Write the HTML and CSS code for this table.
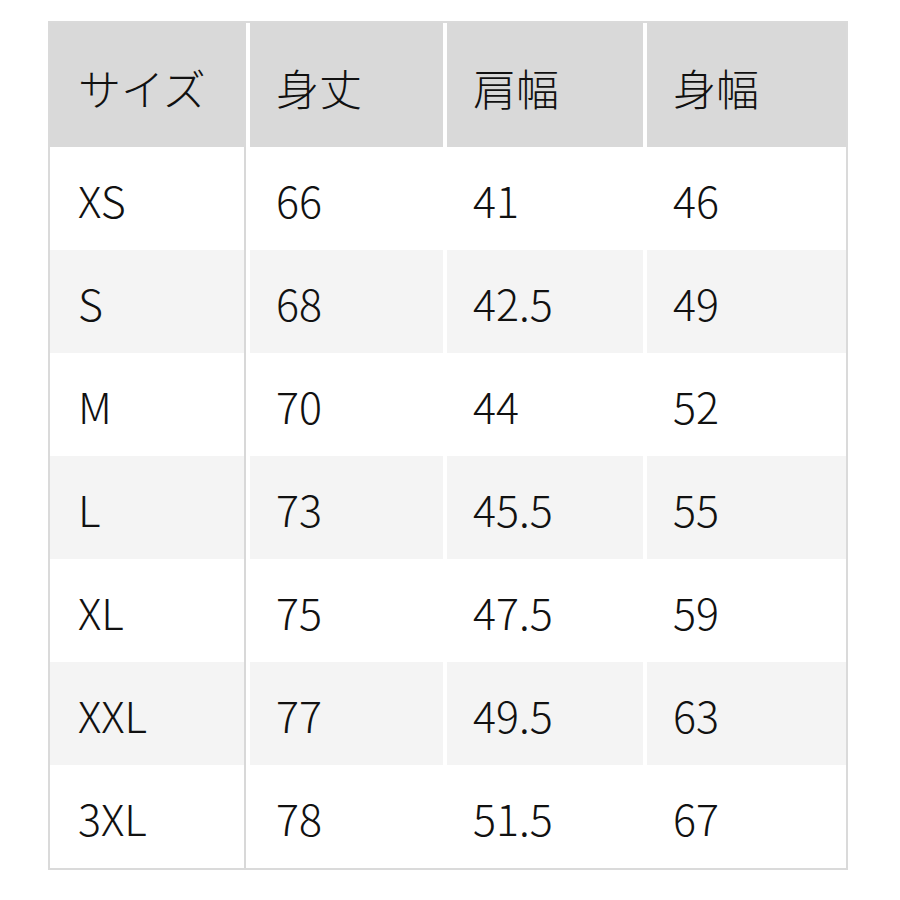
FILE: index.html
```html
<!DOCTYPE html>
<html lang="ja">
<head>
<meta charset="utf-8">
<title>サイズ表</title>
<link rel="stylesheet" href="styles.css">
</head>
<body>
<div class="size-table" role="table">
  <div class="cell head first">サイズ</div>
  <div class="cell head">身丈</div>
  <div class="cell head">肩幅</div>
  <div class="cell head">身幅</div>

  <div class="cell first">XS</div><div class="cell">66</div><div class="cell">41</div><div class="cell">46</div>
  <div class="cell first alt">S</div><div class="cell alt">68</div><div class="cell alt">42.5</div><div class="cell alt">49</div>
  <div class="cell first">M</div><div class="cell">70</div><div class="cell">44</div><div class="cell">52</div>
  <div class="cell first alt">L</div><div class="cell alt">73</div><div class="cell alt">45.5</div><div class="cell alt">55</div>
  <div class="cell first">XL</div><div class="cell">75</div><div class="cell">47.5</div><div class="cell">59</div>
  <div class="cell first alt">XXL</div><div class="cell alt">77</div><div class="cell alt">49.5</div><div class="cell alt">63</div>
  <div class="cell first">3XL</div><div class="cell">78</div><div class="cell">51.5</div><div class="cell">67</div>
</div>
</body>
</html>
```

FILE: styles.css
```css
html, body {
  margin: 0;
  padding: 0;
  background: #ffffff;
}

body {
  font-family: "Noto Sans CJK JP", "Noto Sans", sans-serif;
  font-weight: 300;
  color: #111111;
}

.size-table {
  margin: 21px 0 0 48px;
  width: 796px;
  border: 2px solid #dadada;
  display: grid;
  grid-template-columns: 196px 193px 196px 199px;
  grid-template-rows: 124px repeat(7, 103px);
  column-gap: 4px;
  row-gap: 0;
  background: #ffffff;
}

.cell {
  display: flex;
  align-items: center;
  padding: 2px 0 0 26px;
  font-size: 43px;
  line-height: 1;
  background: #ffffff;
  box-sizing: border-box;
}

.cell.first {
  padding-left: 28px;
  border-right: 2px solid #d8d8d8;
}

.cell.head {
  background: #d9d9d9;
  font-size: 43px;
  padding-top: 4px;
}

.cell.head.first {
  border-right: none;
}

.cell.alt {
  background: #f4f4f4;
}
```
